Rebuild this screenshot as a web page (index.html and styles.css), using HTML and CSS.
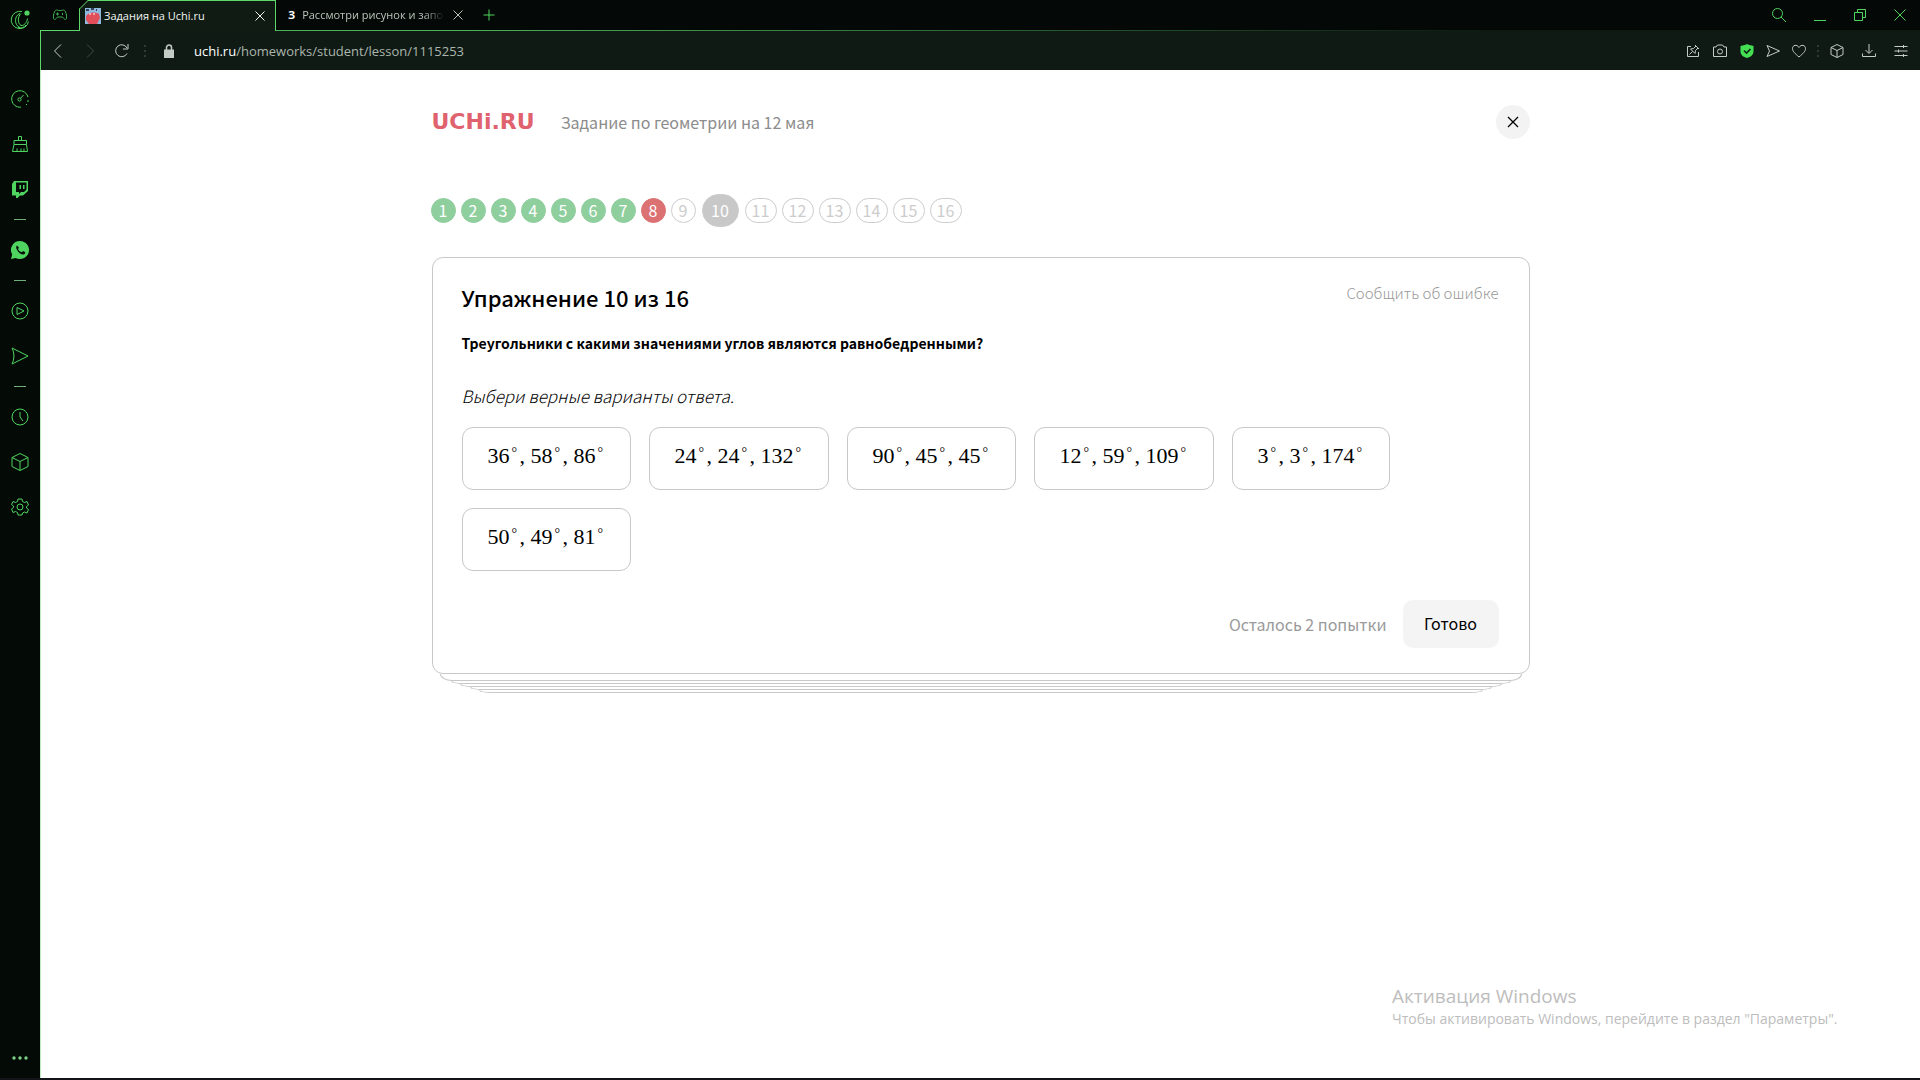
FILE: index.html
```html
<!DOCTYPE html>
<html lang="ru">
<head>
<meta charset="utf-8">
<title>Задания на Uchi.ru</title>
<link rel="stylesheet" href="styles.css">
</head>
<body>
<div class="browser">
  <nav class="sidebar" aria-label="Боковая панель">
    <button class="side-btn side-logo" aria-label="Opera GX"><svg width="22" height="22" viewBox="0 0 22 22"><path d="M13 2.500a8.700 8.700 0 1 0 6.500 10M11 4.500c-6 2-6 12 0 14M12 4.500c-3.500 3-3.500 10 0 12 3 .5 6-3 6.500-7M17 16c-2 2.500-5 3.500-8 2.500"/><circle cx="18" cy="4" r="2.600" fill="currentColor" stroke="none"/></svg></button>
    <button class="side-btn" aria-label="GX Control"><svg width="20" height="20" viewBox="0 0 20 20"><path d="M18 8A8.300 8.300 0 1 0 11 18.200M18 11v2M16.500 15v1"/><circle cx="9.500" cy="10.500" r="1.600"/><path d="m10.500 9.300 3-3.300"/></svg></button>
    <button class="side-btn" aria-label="GX Cleaner"><svg width="20" height="20" viewBox="0 0 20 20"><path d="M8.500 6.500V2.500h3v4M4 6.500h12.500v4H4zM4 10.500l-1.500 7h15l-1-7M7 17.500v-3M11 17.500v-3M14 17.500v-3"/></svg></button>
    <button class="side-btn" aria-label="Twitch"><svg width="20" height="20" viewBox="0 0 20 20"><path fill="currentColor" stroke="none" fill-rule="evenodd" d="M4 2h14v10l-5 4.500h-3L7.500 19H6v-2.500H2V5zM6 3.500v9.500h3v2l2-2h3l2.500-2.500v-7zM9.500 6H11v4H9.500zM13 6h1.500v4H13z"/></svg></button>
    <hr>
    <button class="side-btn" aria-label="WhatsApp"><svg width="20" height="20" viewBox="0 0 20 20"><path fill="currentColor" stroke="none" d="M10 1a9 9 0 1 1-4.300 16.900L1 19l1.200-4.500A9 9 0 0 1 10 1z"/><path fill="#061008" stroke="none" d="M7 5.500c-3 2 2.500 9.500 6.500 9 2-.5 2-2 1.500-2.500l-2-1-1.200 1.300C10 12 8.300 10 8 9l1-1.200z"/></svg></button>
    <hr>
    <button class="side-btn" aria-label="Плеер"><svg width="20" height="20" viewBox="0 0 20 20"><circle cx="10" cy="10" r="8"/><path d="M7 6.500 14 10l-7 3.500z"/></svg></button>
    <button class="side-btn" aria-label="Мой поток"><svg width="20" height="20" viewBox="0 0 20 20"><path d="m2 2 16 8-16 8c2.500-5 2.500-11 0-16z"/></svg></button>
    <hr>
    <button class="side-btn" aria-label="История"><svg width="20" height="20" viewBox="0 0 20 20"><circle cx="10" cy="10" r="8"/><path d="M10 5v5l3 4"/></svg></button>
    <button class="side-btn" aria-label="Расширения"><svg width="20" height="20" viewBox="0 0 20 20"><path d="m10 1.500 8 4v9l-8 4-8-4v-9zM2 5.500l8 4 8-4M10 9.500v9"/></svg></button>
    <button class="side-btn" aria-label="Настройки"><svg width="20" height="20" viewBox="0 0 20 20"><path d="M8 2h4l.5 2.500 2 1 2.500-1 1.500 3.500-2 1.500v1.500l2 1.500-1.500 3.500-2.500-1-2 1L12 18H8l-.5-2.500-2-1-2.500 1L1.500 12l2-1.500V9l-2-1.500L3 4.500l2.500 1 2-1z"/><circle cx="10" cy="10" r="3"/></svg></button>
    <button class="side-btn side-more" aria-label="Ещё"><svg width="20" height="20" viewBox="0 0 20 20"><g fill="#7fd088" stroke="none"><circle cx="4" cy="10" r="1.700"/><circle cx="10" cy="10" r="1.700"/><circle cx="16" cy="10" r="1.700"/></g></svg></button>
  </nav>

  <div class="window">
    <header class="tabs">
      <button class="gx-corner" aria-label="GX Corner"><svg width="16" height="12" viewBox="0 0 16 12"><path d="M3.500 1.500c1.500-.8 2.500-.5 3 0h3c.5-.5 1.500-.8 3 0 1.500 1 2.300 5 2 8-1 2-2.500.5-4-1.500h-5c-1.500 2-3 3.500-4 1.500-.3-3 .5-7 2-8zM4 5h3M5.500 3.500v3M10.500 4v2"/></svg></button>
      <div class="tab tab-active">
        <svg class="tab-edge" width="9" height="9" viewBox="0 0 9 9"><path fill="#040806" stroke="none" d="M0 0h9L0 9z"/><path d="M.5 9 9 .5"/></svg>
        <svg class="favicon" width="16" height="16" viewBox="0 0 16 16"><path fill="#91b9dd" stroke="none" d="M0 0h16v16H0z"/><path fill="#e04f5a" stroke="none" d="M3 6c3-2 8-2 11 0l1 4-3 6H4l-3-4V8z"/><path stroke="#34415e" stroke-width="2" d="M1 2h3M6 1h3M11 2h1"/><path stroke="#fff" d="M5 5v2M9 5v2"/></svg>
        <span class="tab-title">Задания на Uchi.ru</span>
        <button class="tab-close" aria-label="Закрыть вкладку"><svg width="10" height="10" viewBox="0 0 10 10"><path d="m.5.5 9 9M9.500.5l-9 9"/></svg></button>
      </div>
      <div class="tab tab-other">
        <b class="letter-icon">З</b>
        <span class="tab-title">Рассмотри рисунок и запо</span>
        <button class="tab-close" aria-label="Закрыть вкладку"><svg width="10" height="10" viewBox="0 0 10 10"><path d="m.5.5 9 9M9.500.5l-9 9"/></svg></button>
      </div>
      <div class="tab-rest">
        <button class="new-tab" aria-label="Новая вкладка"><svg width="12" height="12" viewBox="0 0 12 12"><path d="M6 .5v11M.5 6h11"/></svg></button>
        <div class="window-controls">
          <button aria-label="Поиск"><svg width="16" height="16" viewBox="0 0 16 16"><circle cx="6.500" cy="6.500" r="5"/><path d="m10 10 5 5"/></svg></button>
          <button aria-label="Свернуть"><svg width="12" height="16" viewBox="0 0 12 16"><path d="M0 13.500h12"/></svg></button>
          <button aria-label="Развернуть"><svg width="14" height="14" viewBox="0 0 14 14"><path d="M1.500 4.500h8v8h-8zM4.500 4.500v-3h8v8h-3"/></svg></button>
          <button aria-label="Закрыть"><svg width="12" height="12" viewBox="0 0 12 12"><path d="m.5.5 11 11M11.500.5l-11 11"/></svg></button>
        </div>
      </div>
    </header>

    <div class="toolbar">
      <div class="nav-buttons">
        <button aria-label="Назад"><svg width="14" height="14" viewBox="0 0 14 14"><path d="M10 .5 3.500 7l6.500 6.500"/></svg></button>
        <button class="dim" aria-label="Вперёд"><svg width="14" height="14" viewBox="0 0 14 14"><path d="M4 .5 10.500 7 4 13.500"/></svg></button>
        <button aria-label="Обновить"><svg width="14" height="14" viewBox="0 0 14 14"><path d="M12 9.500A6 6 0 1 1 12 4M13 0v5H8"/></svg></button>
      </div>
      <span class="dots"></span>
      <svg class="lock" width="12" height="14" viewBox="0 0 12 14"><path fill="currentColor" stroke="none" d="M1 5.500h10V14H1z"/><path stroke-width="1.500" d="M3.500 6V3.500a2.500 2.500 0 0 1 5 0V6"/></svg>
      <a class="url" href="#"><span>uchi.ru</span>/homeworks/student/lesson/1115253</a>
      <div class="tools">
        <button aria-label="Закрепить"><svg width="14" height="14" viewBox="0 0 14 14"><path d="M5 2.500H1.500v10h11V8M9 1l4 4M10 2 7.500 4.500l-3 .5L9 9.500l.5-3L12 4M6.500 7.500l-3 3"/></svg></button>
        <button aria-label="Снимок"><svg width="16" height="14" viewBox="0 0 16 14"><path d="M1.500 3H4l1.500-2h5L12 3h2.500v9.500h-13z"/><circle cx="8" cy="7.500" r="2.500"/></svg></button>
        <button aria-label="Защита"><svg width="14" height="14" viewBox="0 0 14 14"><path fill="#45df53" stroke="none" d="M7 0c2 1 4.500 1.500 6.500 2v5c0 4-3 6-6.500 7C3.500 13 .5 11 .5 7V2C3 1.500 5 1 7 0z"/><path stroke="#0b2412" stroke-width="1.600" d="m4 6.500 2.500 2.500L10.500 5"/></svg></button>
        <button aria-label="Отправить"><svg width="14" height="14" viewBox="0 0 14 14"><path d="m1 1.500 12.500 5.500L1 12.500 3.500 7z"/></svg></button>
        <button aria-label="Избранное"><svg width="14" height="14" viewBox="0 0 14 14"><path d="M7 13C3 9.500.5 7.500.5 4.500.5 1 5 0 7 3.500 9 0 13.500 1 13.500 4.500c0 3-2.500 5-6.500 8.500z"/></svg></button>
        <span class="dots"></span>
        <button class="gap-left" aria-label="Расширения"><svg width="14" height="14" viewBox="0 0 14 14"><path d="M7 .5 13 3.500v7l-6 3-6-3v-7zM1 3.500l6 3 6-3M7 6.500v7"/></svg></button>
        <button class="gap-left" aria-label="Загрузки"><svg width="14" height="14" viewBox="0 0 14 14"><path d="M7 0v9M3.500 6 7 9.500 10.500 6M.5 9.500v3h13v-3"/></svg></button>
        <button class="gap-left" aria-label="Простая настройка"><svg width="14" height="14" viewBox="0 0 14 14"><path d="M.5 2.500h13M.5 7h13M.5 11.500h13M9.500 1v3M4.500 5.500v3M9.500 10v3"/></svg></button>
      </div>
    </div>

    <main class="page">
      <div class="lesson">
        <header class="lesson-head">
          <a class="brand" href="#">UCHi.RU</a>
          <span class="lesson-title">Задание по геометрии на 12 мая</span>
          <button class="lesson-close" aria-label="Закрыть задание"><svg width="12" height="12" viewBox="0 0 12 12"><path stroke-width="1.300" d="m1 1 10 10M11 1 1 11"/></svg></button>
        </header>

        <nav class="steps" aria-label="Упражнения">
          <a class="step right" href="#">1</a>
          <a class="step right" href="#">2</a>
          <a class="step right" href="#">3</a>
          <a class="step right" href="#">4</a>
          <a class="step right" href="#">5</a>
          <a class="step right" href="#">6</a>
          <a class="step right" href="#">7</a>
          <a class="step wrong" href="#">8</a>
          <a class="step" href="#">9</a>
          <a class="step current" href="#">10</a>
          <a class="step wide" href="#">11</a>
          <a class="step wide" href="#">12</a>
          <a class="step wide" href="#">13</a>
          <a class="step wide" href="#">14</a>
          <a class="step wide" href="#">15</a>
          <a class="step wide" href="#">16</a>
        </nav>

        <section class="card">
          <div class="card-head">
            <h1>Упражнение 10 из 16</h1>
            <a class="report" href="#">Сообщить об ошибке</a>
          </div>
          <p class="question">Треугольники с какими значениями углов являются равнобедренными?</p>
          <p class="hint">Выбери верные варианты ответа.</p>
          <div class="options">
            <button class="option"><span>36<i>°</i><u>,</u>58<i>°</i><u>,</u>86<i>°</i></span></button>
            <button class="option"><span>24<i>°</i><u>,</u>24<i>°</i><u>,</u>132<i>°</i></span></button>
            <button class="option"><span>90<i>°</i><u>,</u>45<i>°</i><u>,</u>45<i>°</i></span></button>
            <button class="option"><span>12<i>°</i><u>,</u>59<i>°</i><u>,</u>109<i>°</i></span></button>
            <button class="option"><span>3<i>°</i><u>,</u>3<i>°</i><u>,</u>174<i>°</i></span></button>
            <button class="option"><span>50<i>°</i><u>,</u>49<i>°</i><u>,</u>81<i>°</i></span></button>
          </div>
          <div class="card-foot">
            <span class="attempts">Осталось 2 попытки</span>
            <button class="submit">Готово</button>
          </div>
        </section>
        <div class="stack">
          <div class="sheet sheet-first"></div>
          <div class="sheet"></div>
          <div class="sheet"></div>
          <div class="sheet"></div>
          <div class="sheet"></div>
        </div>
      </div>
    </main>
  </div>
</div>
<aside class="watermark">
  <p class="watermark-title">Активация Windows</p>
  <p>Чтобы активировать Windows, перейдите в раздел "Параметры".</p>
</aside>
</body>
</html>
```
FILE: styles.css
```css
* { box-sizing: border-box; }

body {
  margin: 0;
  background: #fff;
  color: #000;
  font-family: "Noto Sans CJK SC", "Noto Sans", sans-serif;
}

button {
  display: flex;
  align-items: center;
  justify-content: center;
  padding: 0;
  border: 0;
  background: none;
  color: inherit;
  font: inherit;
}

a { color: inherit; text-decoration: none; }
p, h1 { margin: 0; }
svg { display: block; flex: none; fill: none; stroke: currentColor; }

.browser {
  display: flex;
  min-height: 100vh;
  border-bottom: 2px solid #121418;
}

/* left panel */
.sidebar {
  display: flex;
  flex-direction: column;
  align-items: center;
  flex: none;
  width: 40px;
  background: #040b06;
  color: #4fd55f;
}
.side-btn { width: 40px; height: 45px; }
.side-logo { height: 39px; margin-bottom: 37px; }
.sidebar hr { width: 12px; height: 1px; margin: 8px 0 7px; border: 0; background: #6fae7b; }
.side-more { height: 40px; margin-top: auto; }

.window {
  display: flex;
  flex-direction: column;
  flex: 1;
  min-width: 0;
}

/* tab strip */
.tabs {
  display: flex;
  height: 31px;
  background: #040806;
  color: #b9c4bb;
  font: 11px/30px "Open Sans", "Noto Sans", sans-serif;
}
.gx-corner {
  width: 39px;
  border: solid #5fd86a;
  border-width: 0 0 1px;
  color: #3fb04e;
}
.tab { display: flex; align-items: center; position: relative; }
.tab-active {
  width: 197px;
  padding: 0 10px 0 5px;
  border: solid #5fd86a;
  border-width: 1px 1px 0;
  background: #101b14;
  color: #f2f5f2;
}
.tab-edge { position: absolute; left: -1px; top: -1px; color: #5fd86a; }
.tab-title { flex: 1; margin-left: 3px; overflow: hidden; white-space: nowrap; }
.tab-other {
  width: 195px;
  padding: 0 8px 0 12px;
  border-bottom: 1px solid #4bb057;
}
.tab-other .tab-title {
  margin: 0 8px 0 7px;
  mask-image: linear-gradient(90deg, #000 85%, transparent);
}
.letter-icon { color: #fff; font-size: 11px; }
.tab-rest {
  display: flex;
  align-items: center;
  justify-content: space-between;
  flex: 1;
  padding: 0 14px 0 12px;
  border-bottom: 1px solid;
  border-image: linear-gradient(90deg, #4bb057, #0d1a11 70%) 1;
  color: #4fd55f;
}
.window-controls { display: flex; align-items: center; gap: 27px; }

/* address bar */
.toolbar {
  display: flex;
  align-items: center;
  height: 39px;
  padding: 0 12px 0 10px;
  border-left: 1px solid #5fd86a;
  background: #101a14;
  color: #c3cdc5;
}
.nav-buttons { display: flex; gap: 18px; }
.dim { color: #3d4a41; }
.dots {
  width: 2px;
  height: 12px;
  margin: 0 15px;
  background: repeating-linear-gradient(#2f3a32 0 2px, transparent 2px 5px);
}
.lock { margin: 0 19px 0 2px; }
.url { font: 13px/20px "Open Sans", "Noto Sans", sans-serif; color: #aab6ad; }
.url span { color: #fff; }
.tools { display: flex; align-items: center; gap: 12px; margin-left: auto; }
.tools .dots { margin: 0 -1px; }
.tools .gap-left + .gap-left { margin-left: 6px; }

/* lesson page */
.page { flex: 1; padding: 35px 32px; border-left: 1px solid #bfe9c3; }
.lesson { max-width: 1098px; margin: 0 auto; }
.lesson-head { display: flex; align-items: center; height: 34px; }
.brand { color: #e0626e; font: bold 22px/34px "DejaVu Sans", sans-serif; }
.lesson-title { margin-left: 26px; color: #8c8c8c; font-size: 16px; }
.lesson-close {
  width: 34px;
  height: 34px;
  margin-left: auto;
  border-radius: 17px;
  background: #f3f3f3;
}

.steps { display: flex; align-items: center; gap: 5px; height: 34px; margin: 54px -1px 0; }
.step {
  width: 25px;
  height: 25px;
  border: 1px solid #ccc;
  border-radius: 13px;
  color: #ccc;
  font-size: 16px;
  line-height: 23px;
  text-align: center;
}
.right { border-color: #8fce9d; background: #8fce9d; color: #fff; }
.wrong { border-color: #dc7173; background: #dc7173; color: #fff; }
.wide { width: 32px; }
.current {
  width: 37px;
  height: 33px;
  margin: 0 1px;
  border-radius: 17px;
  background: #c8c8c8;
  color: #fff;
  line-height: 31px;
}

.card {
  margin-top: 30px;
  padding: 23px 30px 25px 29px;
  border: 1px solid #c8c8c8;
  border-radius: 11px;
}
.card-head { display: flex; justify-content: space-between; }
h1 { font-size: 22px; font-weight: 500; line-height: 32px; }
.report { color: #999; font-size: 15px; font-weight: 300; line-height: 24px; }
.question { margin-top: 18px; font-size: 14px; font-weight: 700; line-height: 24px; }
.hint { margin-top: 28px; font-size: 17px; font-style: italic; font-weight: 300; line-height: 26px; }
.options { display: flex; flex-wrap: wrap; gap: 18px; margin-top: 18px; }
.option {
  height: 63px;
  padding: 0 25px 6px;
  border: 1px solid #c8c8c8;
  border-radius: 11px;
  font: 22px/28px "Liberation Serif", serif;
}
.option i {
  display: inline-block;
  width: 9px;
  padding-left: 2px;
  font-size: 14px;
  font-style: normal;
  line-height: 10px;
  text-align: left;
  vertical-align: 6px;
}
.option u { display: inline-block; width: 12px; padding-left: 1px; text-align: left; text-decoration: none; }
.card-foot { display: flex; align-items: center; justify-content: flex-end; gap: 16px; margin-top: 29px; }
.attempts { color: #9a9a9a; font-size: 16px; }
.submit {
  width: 96px;
  height: 48px;
  padding-bottom: 2px;
  border-radius: 10px;
  background: #f4f4f4;
  font-size: 16px;
}

/* edges of the remaining cards under the current one */
.stack { display: flex; flex-direction: column; padding: 0 8px; }
.sheet {
  height: 3px;
  border: 1px solid #c8c8c8;
  border-top: 0;
  border-radius: 0 0 12px 12px / 0 0 3px 3px;
}
.sheet-first { height: 7px; border-radius: 0 0 12px 12px / 0 0 7px 7px; }
.sheet:nth-child(2) { margin: 0 11px; }
.sheet:nth-child(3) { margin: 0 20px; }
.sheet:nth-child(4) { margin: 0 30px; }
.sheet:nth-child(5) { margin: 0 39px; }

/* system notice over the desktop */
.watermark {
  position: absolute;
  right: 74px;
  bottom: 51px;
  width: 454px;
  color: #bdbdbd;
  font: 14px/20px "Open Sans", "Noto Sans", sans-serif;
}
.watermark-title { font-size: 19px; line-height: 26px; }
```
